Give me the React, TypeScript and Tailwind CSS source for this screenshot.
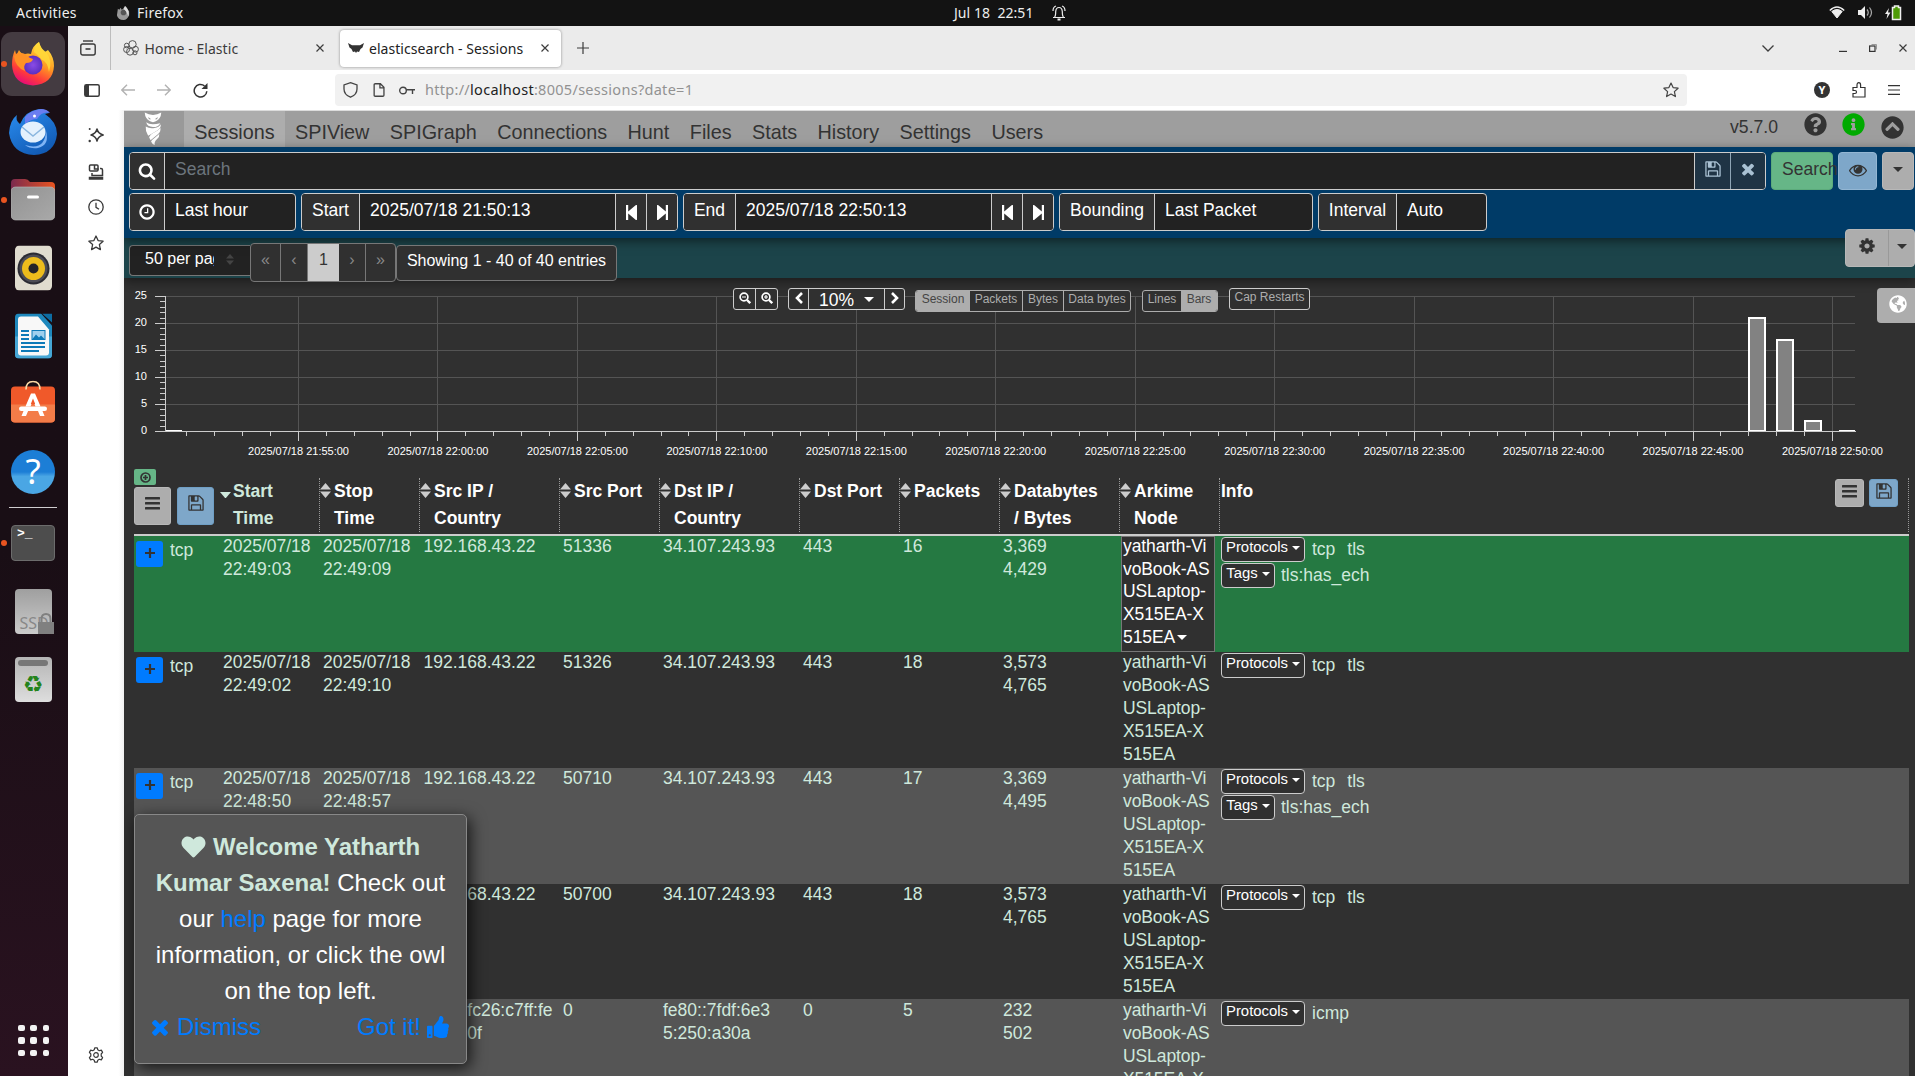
import React from "react";
import {
  FaChevronCircleUp,
  FaGlobeAmericas,
  FaHeart,
  FaInfoCircle,
  FaQuestionCircle,
  FaThumbsUp,
} from "react-icons/fa";

const PATHS = {
  search:
    "M1216 832q0-185-131.5-316.5t-316.5-131.5-316.5 131.5-131.5 316.5 131.5 316.5 316.5 131.5 316.5-131.5 131.5-316.5zm512 832q0 52-38 90t-90 38q-54 0-90-38l-343-342q-179 124-399 124-143 0-273.5-55.5t-225-150-150-225-55.5-273.5 55.5-273.5 150-225 225-150 273.5-55.5 273.5 55.5 225 150 150 225 55.5 273.5q0 220-124 399l343 343q37 37 37 90z",
  times:
    "M1490 1322q0 40-28 68l-136 136q-28 28-68 28t-68-28l-294-294-294 294q-28 28-68 28t-68-28l-136-136q-28-28-28-68t28-68l294-294-294-294q-28-28-28-68t28-68l136-136q28-28 68-28t68 28l294 294 294-294q28-28 68-28t68 28l136 136q28 28 28 68t-28 68l-294 294 294 294q28 28 28 68z",
  floppy:
    "M512 1536h768v-384h-768v384zm896 0h128v-896q0-14-10-38.5t-20-34.5l-281-281q-10-10-34-20t-39-10v416q0 40-28 68t-68 28h-576q-40 0-68-28t-28-68v-416h-128v1280h128v-416q0-40 28-68t68-28h832q40 0 68 28t28 68v416zm-384-928v-320q0-13-9.5-22.5t-22.5-9.5h-192q-13 0-22.5 9.5t-9.5 22.5v320q0 13 9.5 22.5t22.5 9.5h192q13 0 22.5-9.5t9.5-22.5zm640 32v928q0 40-28 68t-68 28h-1344q-40 0-68-28t-28-68v-1344q0-40 28-68t68-28h928q40 0 88 20t76 48l280 280q28 28 48 76t20 88z",
  clock:
    "M1024 544v448q0 14-9 23t-23 9h-320q-14 0-23-9t-9-23v-64q0-14 9-23t23-9h224v-352q0-14 9-23t23-9h64q14 0 23 9t9 23zm416 352q0-148-73-273t-198-198-273-73-273 73-198 198-73 273 73 273 198 198 273 73 273-73 198-198 73-273zm224 0q0 209-103 385.5t-279.5 279.5-385.5 103-385.5-103-279.5-279.5-103-385.5 103-385.5 279.5-279.5 385.5-103 385.5 103 279.5 279.5 103 385.5z",
  eye: "M1664 960q-152-236-381-353 61 104 61 225 0 185-131.5 316.5t-316.5 131.5-316.5-131.5-131.5-316.5q0-121 61-225-229 117-381 353 133 205 333.5 326.5t434.5 121.5 434.5-121.5 333.5-326.5zm-720-384q0-20-14-34t-34-14q-125 0-214.5 89.5t-89.5 214.5q0 20 14 34t34 14 34-14 14-34q0-86 61-147t147-61q20 0 34-14t14-34zm848 384q0 34-20 69-140 230-376.5 368.5t-499.5 138.5-499.5-139-376.5-368q-20-35-20-69t20-69q140-229 376.5-368t499.5-139 499.5 139 376.5 368q20 35 20 69z",
  cog: "M1152 896q0-106-75-181t-181-75-181 75-75 181 75 181 181 75 181-75 75-181zm512-109v222q0 12-8 23t-20 13l-185 28q-19 54-39 91 35 50 107 138 10 12 10 25t-9 23q-27 37-99 108t-94 71q-12 0-26-9l-138-108q-44 23-91 38-16 136-29 186-7 28-36 28h-222q-14 0-24.5-8.5t-11.5-21.5l-28-184q-49-16-90-37l-141 107q-10 9-25 9-14 0-25-11-126-114-165-168-7-10-7-23 0-12 8-23 15-21 51-66.5t54-70.5q-27-50-41-99l-183-27q-13-2-21-12.5t-8-23.5v-222q0-12 8-23t19-13l186-28q14-46 39-92-40-57-107-138-10-12-10-24 0-10 9-23 26-36 98.5-107.5t94.5-71.5q13 0 26 10l138 107q44-23 91-38 16-136 29-186 7-28 36-28h222q14 0 24.5 8.5t11.5 21.5l28 184q49 16 90 37l142-107q9-9 24-9 13 0 25 10 129 119 165 170 7 8 7 22 0 12-8 23-15 21-51 66.5t-54 70.5q26 50 41 98l183 28q13 2 21 12.5t8 23.5z",
};

function Glyph({ name, className }: { name: keyof typeof PATHS; className: string }) {
  return (
    <svg viewBox="0 0 1792 1792" className={className} fill="currentColor">
      <path d={PATHS[name]} />
    </svg>
  );
}

function Caret({ className = "" }: { className?: string }) {
  return (
    <svg viewBox="0 0 10 5" preserveAspectRatio="none" className={`shrink-0 ${className}`} fill="currentColor">
      <path d="M0 0h10L5 5z" />
    </svg>
  );
}

function Step({ back = false }: { back?: boolean }) {
  return (
    <svg viewBox="0 0 11 15" className={back ? "h-[15px] w-[11px]" : "h-[15px] w-[11px] rotate-180"} fill="#fff">
      <path d="M0 0h2.200v6.600L9.600.3Q11-.6 11 .8v13.400q0 1.400-1.400.5L2.200 8.400V15H0z" />
    </svg>
  );
}

function Bars({ className }: { className: string }) {
  return (
    <svg viewBox="0 0 15 13" className={className} fill="currentColor">
      <rect width="15" height="2.600" y="0" rx=".5" />
      <rect width="15" height="2.600" y="5" rx=".5" />
      <rect width="15" height="2.600" y="10" rx=".5" />
    </svg>
  );
}

/* ---------- Desktop ---------- */

function TopBar() {
  return (
    <header className="flex h-[26px] w-full shrink-0 items-center bg-[#131313] pb-[1px] font-['Noto_Sans',sans-serif] text-[14px] text-[#eee]">
      <span className="ml-[16px] w-[100px] tracking-[0.25px]">Activities</span>
      <svg viewBox="0 0 16 16" className="mr-[6px] h-[15px] w-[15px]">
        <path d="M2 4l1.500 1L5 3l1 2 2-1 1-3 1 2 2 1 2 3v4q-2 5-6 5-6 0-7-5z" fill="#999" />
        <circle cx="8" cy="8" r="3" fill="#555" />
        <path d="M10 1q5 5 3 11q-2-6-5-8z" fill="#ddd" />
      </svg>
      <span className="w-[817px] tracking-[0.25px]">Firefox</span>
      <span className="w-[98px] whitespace-pre tracking-[0.05px]">Jul 18  22:51</span>
      <svg viewBox="0 0 14 16" className="h-[16px] w-[14px]" fill="none" stroke="#eee" strokeWidth="1.200">
        <path d="M1 12.500h12M2.500 12q1.200-1 1.200-5.500Q4 2.500 7 2.500t3.300 4q0 4.500 1.200 5.500M1 6q0-4 3-5M13 6q0-4-3-5" />
        <path d="M5.500 14.500h3" strokeWidth="2" />
      </svg>
      <span className="flex-1" />
      <svg viewBox="0 0 16 13" className="mr-[13px] h-[13px] w-[16px]" fill="none" stroke="#eee">
        <path d="M.8 4.500q7.200-7 14.400 0" strokeWidth="1.500" />
        <path d="M2.800 5.500Q8 1.500 13.200 5.500L8 12z" fill="#eee" strokeWidth="1" />
      </svg>
      <svg viewBox="0 0 15 13" className="mr-[12px] h-[13px] w-[15px]" fill="#eee">
        <path d="M0 4h3l4-4v13L3 9H0z" />
        <path d="M9 3.500q2.500 3 0 6M11.500 1.500q4 5 0 10" fill="none" stroke="#aaa" strokeWidth="1.200" />
      </svg>
      <svg viewBox="0 0 17 16" className="mr-[13px] h-[16px] w-[17px]">
        <path d="M4 3L0 9h2.500L1.500 14 5.500 7.500H3z" fill="#eee" />
        <path d="M7.500 2.500h2v-1.500h4v1.500h2v12h-8z" fill="#4e9a06" stroke="#eee" strokeWidth="1.500" />
      </svg>
    </header>
  );
}

function DockSlot({ dot, children }: { dot?: boolean; children: React.ReactNode }) {
  return (
    <div className="relative flex h-[68px] w-[66px] items-center justify-center">
      {dot && <span className="absolute left-[1px] h-[6px] w-[6px] rounded-full bg-[#e95420]" />}
      {children}
    </div>
  );
}

function Dock() {
  return (
    <aside className="flex w-[68px] shrink-0 flex-col bg-linear-to-b from-[#190e15] via-[#190e15] to-[#2a1220] pt-[4px]">
      <svg width="0" height="0" className="absolute">
        <defs>
          <linearGradient id="fx" x1=".8" y1="0" x2=".3" y2="1">
            <stop offset="0" stopColor="#fff044" />
            <stop offset=".45" stopColor="#ff9a22" />
            <stop offset=".75" stopColor="#ff3b3a" />
            <stop offset="1" stopColor="#e3087c" />
          </linearGradient>
          <radialGradient id="fxg">
            <stop offset="0" stopColor="#8a4be6" />
            <stop offset="1" stopColor="#5a2fc0" />
          </radialGradient>
          <linearGradient id="tb" x1="0" y1="0" x2=".6" y2="1">
            <stop offset="0" stopColor="#2b8ff2" />
            <stop offset="1" stopColor="#125bb5" />
          </linearGradient>
          <linearGradient id="fold" x1="0" y1="0" x2="1" y2="1">
            <stop offset="0" stopColor="#929292" />
            <stop offset="1" stopColor="#a9a9a9" />
          </linearGradient>
          <linearGradient id="foldb" x1="0" y1="0" x2="1" y2="0">
            <stop offset="0" stopColor="#7b2a4e" />
            <stop offset="1" stopColor="#e95420" />
          </linearGradient>
        </defs>
      </svg>
      <div className="relative flex h-[68px] w-[66px] items-center justify-center">
        <div className="absolute left-[1px] h-[64px] w-[64px] rounded-[11px] bg-[#443b41]" />
        <span className="absolute left-[1px] h-[6px] w-[6px] rounded-full bg-[#e95420]" />
        <svg viewBox="0 0 44 46" className="relative h-[46px] w-[44px]">
          <path
            d="M1 24Q1 15 4 9l1 4q2-1 3-4 2 4 6 4 3-1 6 0 1-8 8-12 2 7 6 10l3-2q6 7 6 16Q42 43 22 44.500 2 43 1 24z"
            fill="url(#fx)"
          />
          <circle cx="22" cy="24" r="9.500" fill="url(#fxg)" />
          <path d="M3 15q6-4 11-2 2 3 8 5-1 4-7 4-3 3-1 8Q4 26 3 15z" fill="#ff9226" />
          <path d="M23 11q0-7 5-10 1 6 7 10 7 8 3 20-1-10-8-13-3-4-7-7z" fill="#ffd83a" opacity=".85" />
        </svg>
      </div>
      <DockSlot>
        <svg viewBox="0 0 48 46" className="h-[46px] w-[48px]">
          <path d="M0 24Q1 11 8 6q-2 5 3 9Q16 2 30 0q7 0 10 4l-4 1q12 8 12 20Q46 45 25 46 3 45 0 24z" fill="url(#tb)" />
          <path d="M16 8Q22 1 32 0q6 0 9 4-8-2-13 6-6 0-12 5z" fill="#6a7df0" />
          <circle cx="25.500" cy="7" r="1.500" fill="#fff" />
          <path d="M16 36Q36 42 37 22q4 14-8 17-8 1-13-3z" fill="#7fb4f5" />
          <ellipse cx="24" cy="23" rx="12.500" ry="10.500" fill="#e4f1fd" />
          <path d="M13 18l11 9 11-9" fill="none" stroke="#8ab6df" strokeWidth="1.500" />
        </svg>
      </DockSlot>
      <DockSlot dot>
        <svg viewBox="0 0 44 42" className="h-[42px] w-[44px]">
          <path d="M0 4q0-4 4-4h10q3 0 5 3h21q4 0 4 4v12H0z" fill="url(#foldb)" />
          <rect y="8" width="44" height="33" rx="4.500" fill="url(#fold)" stroke="#bbb" strokeWidth=".6" />
          <rect x="16" y="16.500" width="12" height="3" rx="1.500" fill="#fff" />
        </svg>
      </DockSlot>
      <DockSlot>
        <svg viewBox="0 0 37 45" className="h-[45px] w-[37px] -translate-y-[0.5px]">
          <rect width="37" height="45" rx="4.500" fill="#e0dccf" />
          <circle cx="18.500" cy="23" r="16" fill="#2b2b33" />
          <circle cx="18.500" cy="23" r="14" fill="#4c4c55" />
          <circle cx="18.500" cy="23" r="11.500" fill="#edbc1c" />
          <circle cx="18.500" cy="23" r="5" fill="#242428" />
        </svg>
      </DockSlot>
      <DockSlot>
        <svg viewBox="0 0 37 45" className="h-[45px] w-[37px] -translate-y-[0.5px]">
          <path d="M4 0h22l11 12v29q0 4-4 4H4q-4 0-4-4V4q0-4 4-4z" fill="#1e88bd" />
          <path d="M0 23h37v18q0 4-4 4H4q-4 0-4-4z" fill="#46a7d6" />
          <path d="M6 3h17l11 13v23q0 3-3 3H6q-3 0-3-3V6q0-3 3-3z" fill="#f8f8f8" />
          <path d="M27 0h10v9z" fill="#0d6da3" />
          <path d="M6 17.500h8M6 21.500h8M6 25.500h8M6 29.500h24M6 33.500h24M6 37.500h18" stroke="#0d7ab8" strokeWidth="2" />
          <rect x="17" y="17" width="13" height="9" fill="#9fd0ee" stroke="#0d7ab8" />
          <path d="M17 26l4-5 3 3 2-2 4 4z" fill="#0d7ab8" />
        </svg>
      </DockSlot>
      <DockSlot>
        <svg viewBox="0 0 44 43" className="h-[43px] w-[44px] -translate-y-[2.500px]">
          <rect y="6" width="44" height="36" rx="4" fill="#f0592a" />
          <path d="M0 24h44v14q0 4-4 4H4q-4 0-4-4z" fill="#f37c48" />
          <path d="M15 9q0-8 7-8t7 8" fill="none" stroke="#fbd9a5" strokeWidth="1.600" />
          <path d="M15.500 23.500L20 13h4l4.500 10.500h-4.300L22 18l-2.200 5.500zM12.500 30.500h4.600L15 35.500h-4.500zM27 30.500h4.500l2 5H29z" fill="#fff" />
          <rect x="8" y="26" width="28" height="4.500" rx="2.250" fill="#fff" />
          <path d="M15.500 23.500l-1 2.500h5l1-2.500zM28.500 23.500l1 2.500h-5l-1-2.500z" fill="#fff" />
        </svg>
      </DockSlot>
      <DockSlot>
        <div className="flex h-[44px] w-[44px] items-center justify-center rounded-full bg-linear-to-b from-[#1c7ed6] from-50% to-[#4aa6e4] to-60% pb-[2px] font-['Noto_Sans',sans-serif] text-[35px] text-white">
          ?
        </div>
      </DockSlot>
      <div className="ml-[9px] flex h-[3px] w-[48px] items-center">
        <div className="h-px w-full bg-[#d0cdcf]" />
      </div>
      <DockSlot dot>
        <div className="h-[36px] w-[44px] rounded-[4px] border border-[#6c6c6c] bg-[#4d4d4d] pl-[5px] font-['Liberation_Mono',monospace] text-[13px] leading-[15px] font-bold text-white">
          &gt;_
        </div>
      </DockSlot>
      <DockSlot>
        <div className="relative flex h-[45px] w-[37px] items-end rounded-[4px] bg-linear-to-b from-[#9f9f9f] to-[#cbcbcb] pl-[5px] font-['Noto_Sans',sans-serif] text-[16px] leading-[22px] text-[#888]">
          SSD
          <svg viewBox="0 0 16 21" className="absolute -right-[2px] bottom-0 h-[21px] w-[16px]">
            <path d="M3.500 9V6q0-5 4.500-5t4.500 5v3" fill="none" stroke="#808080" strokeWidth="2" />
            <rect y="9" width="16" height="12" fill="#808080" />
          </svg>
        </div>
      </DockSlot>
      <DockSlot>
        <div className="flex h-[45px] w-[37px] flex-col items-center rounded-[4px] bg-linear-to-b from-[#b5b5b5] to-[#dedede] pt-[3px]">
          <div className="h-[6px] w-[30px] rounded-[3px] bg-[#777]" />
          <span className="mt-[5px] font-['DejaVu_Sans',sans-serif] text-[23px] leading-[26px] text-[#24831b]">♻</span>
        </div>
      </DockSlot>
      <div className="mt-auto mb-[20px] ml-[18px] grid w-[31px] grid-cols-3 gap-[6px]">
        {Array.from({ length: 9 }, (_, i) => (
          <span key={i} className="h-[6.500px] w-[6.500px] rounded-[2px] bg-[#f3f3f3]" />
        ))}
      </div>
    </aside>
  );
}

/* ---------- Browser chrome ---------- */

function Cross({ className }: { className: string }) {
  return (
    <svg viewBox="0 0 8 8" className={className} stroke="#3d3d3d" strokeWidth="1.200">
      <path d="M.5.5l7 7M7.500.5l-7 7" />
    </svg>
  );
}

function TabStrip() {
  return (
    <div className="flex h-[44px] shrink-0 items-center bg-[#ebebeb] font-['Noto_Sans',sans-serif] text-[14px] text-[#3c3c3c]">
      <div className="flex h-full w-[43px] items-center border-r border-[#bdbdbd] pl-[12px]">
        <svg viewBox="0 0 16 16" className="h-[16px] w-[16px]" fill="none" stroke="#3a3a3a" strokeWidth="1.400">
          <path d="M3 1h10" />
          <rect x=".8" y="4" width="14.400" height="11" rx="2" />
          <path d="M5.500 9h5" strokeWidth="1.600" />
        </svg>
      </div>
      <div className="flex h-[36px] w-[229px] items-center pl-[12px]">
        <svg viewBox="0 0 16 16" className="h-[16px] w-[16px]" fill="none" stroke="#555" strokeWidth="1">
          <circle cx="9.500" cy="4.300" r="3.700" />
          <circle cx="3.700" cy="5.500" r="2.300" />
          <circle cx="3.600" cy="9.500" r="3" />
          <circle cx="12.500" cy="9.200" r="2.900" />
          <circle cx="7" cy="11.700" r="3.500" />
          <circle cx="12" cy="12.800" r="2" />
        </svg>
        <span className="ml-[5.500px] flex-1 tracking-[0.05px]">Home - Elastic</span>
        <Cross className="mr-[16px] h-[8px] w-[8px]" />
      </div>
      <div className="flex h-[37px] w-[221px] items-center rounded-[4px] bg-white pl-[8px] shadow-[0_0_3px_rgba(0,0,0,0.4)]">
        <svg viewBox="0 0 16 10" className="h-[10px] w-[16px]" fill="#333">
          <path d="M0 0l4 2.200h8L16 0l-1.500 4.500L12.500 6l-1.500 3-2-.5-1 1.500-1-1.500-2 .5-1.500-3-2-1.500z" />
        </svg>
        <span className="ml-[5px] flex-1 tracking-[0.05px] whitespace-nowrap text-[#222]">elasticsearch - Sessions</span>
        <Cross className="mr-[12px] h-[8px] w-[8px]" />
      </div>
      <svg viewBox="0 0 12 12" className="ml-[16px] h-[12px] w-[12px]" stroke="#3d3d3d" strokeWidth="1.200">
        <path d="M6 0v12M0 6h12" />
      </svg>
      <span className="flex-1" />
      <svg viewBox="0 0 12 7" className="mr-[65px] h-[7px] w-[12px]" fill="none" stroke="#3d3d3d" strokeWidth="1.300">
        <path d="M.5.5L6 6l5.500-5.500" />
      </svg>
      <svg viewBox="0 0 8 8" className="mr-[22px] h-[8px] w-[8px]" stroke="#333" strokeWidth="1.200">
        <path d="M0 7.400h8" />
      </svg>
      <svg viewBox="0 0 8 8" className="mr-[22px] h-[8px] w-[8px]" fill="none" stroke="#333" strokeWidth="1.200">
        <rect x=".6" y="2" width="5.400" height="5.400" />
        <path d="M2.500.5h5v5" stroke="#999" strokeWidth="1" />
      </svg>
      <Cross className="mr-[8px] h-[8px] w-[8px]" />
    </div>
  );
}

function AddressBar() {
  return (
    <div className="flex h-[40px] shrink-0 items-center bg-white font-['Noto_Sans',sans-serif]">
      <svg viewBox="0 0 16 13" className="ml-[16px] h-[13px] w-[16px]">
        <rect x=".8" y=".8" width="14.400" height="11.400" rx="1.500" fill="none" stroke="#3a3a3a" strokeWidth="1.500" />
        <rect x="1" y="1" width="4" height="11" fill="#3a3a3a" />
      </svg>
      <svg viewBox="0 0 14 12" className="ml-[21px] h-[12px] w-[14px]" fill="none" stroke="#b2b2b2" strokeWidth="1.400">
        <path d="M14 6H1M6 .7L.8 6 6 11.300" />
      </svg>
      <svg viewBox="0 0 14 12" className="ml-[22px] h-[12px] w-[14px]" fill="none" stroke="#b2b2b2" strokeWidth="1.400">
        <path d="M0 6h13M8 .7L13.200 6 8 11.300" />
      </svg>
      <svg viewBox="0 0 15 15" className="ml-[22px] h-[15px] w-[15px]" fill="none" stroke="#333" strokeWidth="1.500">
        <path d="M13.800 8.200A6.300 6.300 0 1 1 11.500 2.900" />
        <path d="M14.500 0v6h-6z" fill="#333" stroke="none" />
      </svg>
      <div className="ml-[127px] flex h-[32px] w-[1352px] items-center rounded-[4px] bg-[#f1f1f1]">
        <svg viewBox="0 0 15 16" className="ml-[8px] h-[16px] w-[15px]" fill="none" stroke="#444" strokeWidth="1.300">
          <path d="M7.500.7l6.500 2.200v4Q14 12.500 7.500 15.200 1 12.500 1 6.900v-4z" />
        </svg>
        <svg viewBox="0 0 12 15" className="ml-[15px] h-[14px] w-[12px]" fill="none" stroke="#444" strokeWidth="1.400">
          <path d="M2 .8h5.500L11.300 4.600V13q0 1.200-1.200 1.200H2Q.8 14.200.8 13V2Q.8.8 2 .8zM7 .8v4.400h4.300" />
        </svg>
        <svg viewBox="0 0 16 9" className="ml-[14px] h-[9px] w-[16px]" fill="none" stroke="#444" strokeWidth="1.400">
          <circle cx="4" cy="4.500" r="3.300" />
          <path d="M7.300 3.800H16M13.500 4v4" />
        </svg>
        <span className="ml-[10px] flex-1 text-[14.500px] tracking-[0.290px] text-[#929292]">
          http://<span className="text-[#222]">localhost</span>:8005/sessions?date=1
        </span>
        <svg viewBox="0 0 16 16" className="mr-[8px] h-[16px] w-[16px]" fill="none" stroke="#444" strokeWidth="1.200" strokeLinejoin="round">
          <path d="M8 1l2.100 4.600 5 .6-3.700 3.400 1 5L8 12.100l-4.400 2.500 1-5L.9 6.200l5-.6z" />
        </svg>
      </div>
      <div className="ml-[127px] flex h-[16px] w-[16px] items-center justify-center rounded-full bg-[#333] text-[11px] font-bold text-white">Y</div>
      <svg viewBox="0 0 14 16" className="ml-[22px] h-[16px] w-[14px]" fill="none" stroke="#333" strokeWidth="1.200">
        <path d="M1 5.500h4V3q0-2.300 1.800-2.300T8.600 3v2.500H13V15H1v-3.500h2q1.500 0 1.500-1.500T3 8.500H1z" />
      </svg>
      <svg viewBox="0 0 12 10" className="ml-[22px] h-[10px] w-[12px]" stroke="#333" strokeWidth="1.200">
        <path d="M0 .7h12M0 5h12M0 9.300h12" />
      </svg>
    </div>
  );
}

function BrowserSidebar() {
  return (
    <aside className="flex w-[56px] shrink-0 flex-col items-center bg-linear-to-r from-white from-90% to-[#f1f1f1] pt-[17px] pb-[13px]">
      <svg viewBox="0 0 16 16" className="h-[16px] w-[16px]" fill="none" stroke="#3a3a3a" strokeWidth="1.500" strokeLinejoin="round">
        <path d="M9 2q1 4.500 6.200 6Q10 9.500 9 14 8 9.500 3 8q5-1.500 6-6z" />
        <circle cx="1.700" cy="2" r="1" fill="#3a3a3a" stroke="none" />
        <circle cx="1.700" cy="14" r="1.200" fill="#3a3a3a" stroke="none" />
      </svg>
      <svg viewBox="0 0 16 16" className="mt-[21px] h-[16px] w-[16px]" fill="none" stroke="#3a3a3a" strokeWidth="1.500">
        <rect x="1.500" y="1" width="8.500" height="6" rx="1" />
        <path d="M6.500 1v4h4M12 4.500h1q1.500 0 1.500 1.500v5.500H4V9" />
        <path d="M1.500 13.500h13v1.500h-13z" fill="#3a3a3a" />
      </svg>
      <svg viewBox="0 0 16 16" className="mt-[19px] h-[16px] w-[16px]" fill="none" stroke="#3a3a3a" strokeWidth="1.300">
        <circle cx="8" cy="8" r="7.200" />
        <path d="M8 3.800V8.300l3 2" />
      </svg>
      <svg viewBox="0 0 16 16" className="mt-[20px] h-[16px] w-[16px]" fill="none" stroke="#3a3a3a" strokeWidth="1.300" strokeLinejoin="round">
        <path d="M8 1l2.100 4.600 5 .6-3.700 3.400 1 5L8 12.100l-4.400 2.500 1-5L.9 6.200l5-.6z" />
      </svg>
      <svg viewBox="0 0 16 16" className="mt-auto h-[16px] w-[16px]" fill="none" stroke="#3a3a3a" strokeWidth="1.200" strokeLinejoin="round">
        <path d="M6.700.8h2.600l.5 2 1.500.9 2-.6 1.300 2.300L13.200 7v2l1.400 1.600-1.300 2.300-2-.6-1.500.9-.5 2H6.700l-.5-2-1.500-.9-2 .6-1.300-2.300L2.800 9V7L1.400 5.400 2.700 3.100l2 .6 1.500-.9z" />
        <circle cx="8" cy="8" r="2.300" />
      </svg>
    </aside>
  );
}

/* ---------- Arkime ---------- */

const NAV = ["SPIView", "SPIGraph", "Connections", "Hunt", "Files", "Stats", "History", "Settings", "Users"];

function Nav() {
  return (
    <nav className="flex h-[36px] shrink-0 bg-[#9e9e9e] text-[19.800px] text-[#333]">
      <div className="flex w-[60px] justify-center bg-[#999] pt-[1px] pr-[2px]">
        <svg viewBox="0 0 18 34" className="h-[33px] w-[18px]" fill="#fff">
          <path d="M.5.5q4 2.500 8.500 2.500T17.500.5q-.3 4-1.500 5.500-2 3.500-7 4.500Q4 9.500 2 6 .8 4.500.5.5zM4 5.200l3.200 2.300H4.800zM14 5.200l-3.200 2.300h2.400z" fillRule="evenodd" />
          <path d="M2 10.500q4 3.500 14.500 1-2 4-7.500 4Q3 15 2 10.500z" />
          <path d="M1.500 15q4 2.500 9 1.500t6.500-4q.5 4-4.500 7T4 24.500Q1 20 1.500 15z" />
          <path d="M5 26q1-3 6-5.500t5.500-4.500q1 4-2.500 7t-7.500 6z" />
          <path d="M7 30.500q1-2 4.500-4.500t4-3.500q.5 3-2.500 5.500t-2.200 6q-3-1-3.800-3.500z" />
        </svg>
      </div>
      <div className="flex w-[101px] items-center justify-center bg-[#adadad] pt-[6px]">Sessions</div>
      <div className="flex items-center gap-[20.450px] pt-[6px] pl-[10px]">
        {NAV.map((n) => (
          <span key={n}>{n}</span>
        ))}
      </div>
      <div className="ml-auto flex items-start">
        <span className="mr-[26px] pt-[4px] text-[17.600px] leading-[24px]">v5.7.0</span>
        <FaQuestionCircle className="mt-[2px] mr-[15px] h-[23px] w-[23px]" />
        <FaInfoCircle className="mt-[2px] mr-[16px] h-[23px] w-[23px] text-[#00aa00]" />
        <FaChevronCircleUp className="mt-[5px] mr-[11px] h-[23px] w-[23px]" />
      </div>
    </nav>
  );
}

function Group({ className, children }: { className: string; children: React.ReactNode }) {
  return (
    <div className={`flex h-[38px] shrink-0 overflow-hidden rounded-[4px] border border-[#ccc] bg-[#222] text-[#fff] ${className}`}>
      {children}
    </div>
  );
}

const labelCell = "flex shrink-0 items-center justify-center border-r border-[#ccc] bg-[#303030] pb-[4px]";
const iconCell = "flex shrink-0 items-center justify-center border-r border-[#ccc] bg-[#303030]";
const stepCell = "flex w-[31px] shrink-0 items-center justify-center border-l border-[#ccc] bg-[#303030]";

function TimeGroup({ label, value, className, labelClass }: { label: string; value: string; className: string; labelClass: string }) {
  return (
    <Group className={className}>
      <div className={`${labelCell} ${labelClass}`}>{label}</div>
      <div className="flex flex-1 items-center pb-[4px] pl-[10px]">{value}</div>
      <div className={stepCell}>
        <Step back />
      </div>
      <div className={stepCell}>
        <Step />
      </div>
    </Group>
  );
}

function SearchArea() {
  return (
    <section className="relative z-10 flex h-[91px] shrink-0 flex-col gap-[3px] bg-[#003b67] pt-[5px] pl-[5px] shadow-[0_3px_10px_rgba(0,0,0,0.5)]">
      <div className="flex">
        <Group className="w-[1637px]">
          <div className={`${iconCell} w-[35px]`}>
            <Glyph name="search" className="h-[18px] w-[18px]" />
          </div>
          <div className="flex flex-1 items-center pb-[4px] pl-[10px] text-[#6c757d]">Search</div>
          <div className="flex w-[36px] items-center justify-center border-l border-[#ccc] bg-[#1f3445] pb-[4px] text-[#a9c1d3]">
            <Glyph name="floppy" className="h-[18px] w-[18px]" />
          </div>
          <div className="flex w-[35px] items-center justify-center border-l border-[#8fa5b5] bg-[#1f3445] pb-[4px] text-[#a9c1d3]">
            <Glyph name="times" className="h-[18px] w-[18px]" />
          </div>
        </Group>
        <div className="ml-[5px] flex h-[38px] w-[62px] items-center overflow-visible rounded-[4px] border border-[#5cab7b] bg-[#66b687] pb-[4px] pl-[10px] text-[#333]">
          Search
        </div>
        <div className="ml-[5px] flex h-[38px] w-[39px] items-center justify-center rounded-[4px] border border-[#93b6d3] bg-[#7ea7c9] pb-[3px] text-[#333]">
          <Glyph name="eye" className="h-[18px] w-[18px]" />
        </div>
        <div className="ml-[5px] flex h-[38px] w-[32px] items-center justify-center rounded-[4px] border border-[#b8b8b8] bg-[#adadad] pb-[4px] text-[#333]">
          <Caret className="h-[5px] w-[10px]" />
        </div>
      </div>
      <div className="flex gap-[5px]">
        <Group className="w-[167px]">
          <div className={`${iconCell} w-[35px]`}>
            <Glyph name="clock" className="h-[18px] w-[18px]" />
          </div>
          <div className="flex items-center pb-[4px] pl-[10px]">Last hour</div>
        </Group>
        <TimeGroup label="Start" value="2025/07/18 21:50:13" className="w-[377px]" labelClass="w-[58px]" />
        <TimeGroup label="End" value="2025/07/18 22:50:13" className="w-[371px]" labelClass="w-[52px]" />
        <Group className="w-[254px]">
          <div className={`${labelCell} w-[95px]`}>Bounding</div>
          <div className="flex items-center pb-[4px] pl-[10px]">Last Packet</div>
        </Group>
        <Group className="w-[169px]">
          <div className={`${labelCell} w-[78px]`}>Interval</div>
          <div className="flex items-center pb-[4px] pl-[10px]">Auto</div>
        </Group>
      </div>
      <div className="absolute top-[82px] right-0 flex h-[38px] w-[70px] overflow-hidden rounded-[4px] border border-[#b8b8b8] bg-[#adadad] text-[#333]">
        <div className="flex w-[43px] items-center justify-center border-r border-[#999] pb-[4px]">
          <Glyph name="cog" className="h-[18px] w-[18px]" />
        </div>
        <div className="flex flex-1 items-center justify-center pb-[4px]">
          <Caret className="h-[5px] w-[10px]" />
        </div>
      </div>
    </section>
  );
}

function PagingBar() {
  const cell = "flex items-center justify-center border-r border-[#777] pb-[5px] text-[#888]";
  return (
    <section className="flex h-[40px] shrink-0 items-start bg-[#1c444a] pl-[5px] text-[16px] shadow-[0_3px_10px_rgba(0,0,0,0.45)]">
      <div className="mt-[7px] flex h-[31px] w-[121px] items-center overflow-hidden rounded-l-[4px] border border-r-0 border-[#777] bg-[#222] pb-[4px] pl-[15px] text-white">
        <span className="w-[69px] shrink-0 overflow-hidden whitespace-nowrap">50 per page</span>
        <svg viewBox="0 0 8 11" className="mt-[2px] ml-[12px] h-[11px] w-[8px]" fill="#444">
          <path d="M0 4.500L4 0l4 4.500zM0 6.500h8L4 11z" />
        </svg>
      </div>
      <div className="relative z-20 mt-[5px] flex h-[39px] w-[146px] shrink-0 overflow-hidden rounded-[4px] border border-[#777] bg-[#303030]">
        <div className={`${cell} w-[30px]`}>«</div>
        <div className={`${cell} w-[27px]`}>‹</div>
        <div className="flex w-[31px] items-center justify-center bg-[#ccc] pb-[5px] text-[#333]">1</div>
        <div className={`${cell} w-[27px]`}>›</div>
        <div className="flex flex-1 items-center justify-center pb-[5px] text-[#888]">»</div>
      </div>
      <div className="relative z-20 mt-[7px] flex h-[36px] w-[221px] shrink-0 items-center justify-center rounded-[4px] border border-[#777] bg-[#303030] pb-[5px] text-white">
        Showing 1 - 40 of 40 entries
      </div>
    </section>
  );
}

const TIMES = ["21:55", "22:00", "22:05", "22:10", "22:15", "22:20", "22:25", "22:30", "22:35", "22:40", "22:45", "22:50"];
const PITCH = 139.45;
const FIRST = 174.5;

function Chart() {
  const minor: number[] = [];
  for (let i = -4; i < 56; i++) {
    if (i % 5 !== 0) minor.push(FIRST + (i * PITCH) / 5);
  }
  return (
    <svg viewBox="0 0 1791 200" className="h-[200px] w-[1791px]" fontSize="11" fill="#fff" shapeRendering="crispEdges">
      <g stroke="#545454" strokeWidth="1">
        {[0, 1, 2, 3, 4].map((i) => (
          <path key={i} d={`M41 ${18.500 + i * 27}H1731`} />
        ))}
        {TIMES.map((t, i) => (
          <path key={t} d={`M${FIRST + i * PITCH} 18V153`} />
        ))}
      </g>
      <g fill="#828282" stroke="#fff" strokeWidth="2">
        <rect x="1625" y="40" width="16" height="113" />
        <rect x="1653" y="62" width="16" height="91" />
        <rect x="1681" y="143" width="16" height="10" />
      </g>
      <path d="M41 152.500h17M1715 152.500h16" stroke="#fff" strokeWidth="2" />
      <g stroke="#ccc" strokeWidth="1" fill="none">
        <path d="M41.500 18V153.500H1732" />
        {[0, 1, 2, 3, 4, 5].map((i) => (
          <path key={i} d={`M31 ${18.500 + i * 27}h10`} />
        ))}
        {Array.from({ length: 25 }, (_, i) => (
          <path key={i} d={`M36 ${18.500 + i * 5.400}h5`} />
        ))}
        {minor.map((x) => (
          <path key={x} d={`M${x} 154v4`} />
        ))}
        {TIMES.map((t, i) => (
          <path key={t} d={`M${FIRST + i * PITCH} 154v9`} />
        ))}
      </g>
      {[25, 20, 15, 10, 5, 0].map((v, i) => (
        <text key={v} x="23" y={21 + i * 27} textAnchor="end">
          {v}
        </text>
      ))}
      {TIMES.map((t, i) => (
        <text key={t} x={FIRST + i * PITCH} y="177" textAnchor="middle">
          {`2025/07/18 ${t}:00`}
        </text>
      ))}
    </svg>
  );
}

function Zoom({ plus = false }: { plus?: boolean }) {
  return (
    <svg viewBox="0 0 12 12" className="h-[12px] w-[12px]" fill="none" stroke="#fff">
      <circle cx="5" cy="5" r="3.900" strokeWidth="1.700" />
      <path d="M8 8l3.200 3.200" strokeWidth="2.300" />
      <path d={plus ? "M3 5h4M5 3v4" : "M3 5h4"} strokeWidth="1.200" />
    </svg>
  );
}

function Angle({ right = false }: { right?: boolean }) {
  return (
    <svg viewBox="0 0 8 12" className={right ? "h-[12px] w-[8px] rotate-180" : "h-[12px] w-[8px]"} fill="none" stroke="#fff" strokeWidth="2.600">
      <path d="M7 1L2 6l5 5" />
    </svg>
  );
}

function ChartControls() {
  const group = "flex h-[22px] overflow-hidden rounded-[3px] border bg-[#303030]";
  return (
    <div className="absolute top-[10px] left-[609px] flex text-[12px] text-[#adadad]">
      <div className={`${group} w-[45px] border-[#ccc]`}>
        <div className="flex w-[22px] items-center justify-center border-r border-[#ccc] pb-[2px]">
          <Zoom />
        </div>
        <div className="flex flex-1 items-center justify-center pb-[2px]">
          <Zoom plus />
        </div>
      </div>
      <div className={`${group} ml-[10px] w-[117px] border-[#ccc]`}>
        <div className="flex w-[20px] items-center justify-center border-r border-[#ccc] pb-[3px]">
          <Angle />
        </div>
        <div className="flex w-[76px] items-center justify-center gap-[10px] border-r border-[#ccc] text-[17.500px] leading-none text-white">
          <span className="pt-[4px]">10%</span>
          <Caret className="h-[5px] w-[10px]" />
        </div>
        <div className="flex flex-1 items-center justify-center pb-[3px]">
          <Angle right />
        </div>
      </div>
      <div className={`${group} mt-[2px] ml-[10px] w-[216px] border-[#adadad] leading-[17px]`}>
        <div className="w-[54px] bg-[#adadad] text-center text-[#444]">Session</div>
        <div className="w-[53px] border-r border-[#adadad] text-center">Packets</div>
        <div className="w-[41px] border-r border-[#adadad] text-center">Bytes</div>
        <div className="flex-1 text-center">Data bytes</div>
      </div>
      <div className={`${group} mt-[2px] ml-[11px] w-[76px] border-[#adadad] leading-[17px]`}>
        <div className="w-[38px] text-center">Lines</div>
        <div className="flex-1 bg-[#adadad] text-center text-[#444]">Bars</div>
      </div>
      <div className={`${group} ml-[11px] w-[81px] justify-center border-[#ccc] leading-[17px]`}>Cap Restarts</div>
    </div>
  );
}

function Sort() {
  return (
    <svg viewBox="0 0 11 15" className="mt-[5px] mr-[3px] h-[15px] w-[11px] shrink-0" fill="#ccc">
      <path d="M0 6.500L5.500 0 11 6.500zM0 8.500h11L5.500 15z" />
    </svg>
  );
}

const GRID = "grid grid-cols-[85px_101px_100px_140px_100px_140px_100px_100px_120px_100px_689px]";

const HEAD: [string, string?][] = [
  ["Stop", "Time"],
  ["Src IP /", "Country"],
  ["Src Port"],
  ["Dst IP /", "Country"],
  ["Dst Port"],
  ["Packets"],
  ["Databytes", "/ Bytes"],
  ["Arkime", "Node"],
];

function TableHead() {
  return (
    <div className={`${GRID} relative h-[58px] border-b-[2px] border-[#ccc] font-bold text-white leading-[27px]`}>
      <div className="flex items-start gap-[6px] pt-[9px]">
        <div className="flex h-[38px] w-[37px] items-center justify-center rounded-[3px] border border-[#b8b8b8] bg-[#adadad] pb-[5px] text-[#333]">
          <Bars className="h-[13px] w-[15px]" />
        </div>
        <div className="flex h-[38px] w-[37px] items-center justify-center rounded-[3px] border border-[#6f9fc5] bg-[#7ea7c9] pb-[6px] text-[#333]">
          <Glyph name="floppy" className="h-[18px] w-[18px]" />
        </div>
      </div>
      <div className="mb-[2px] flex border-r border-dotted border-[#999] text-[#cfe8dc]">
        <Caret className="mt-[13.500px] mr-[2px] ml-[1px] h-[6.500px] w-[11px]" />
        <span>
          Start
          <br />
          Time
        </span>
      </div>
      {HEAD.map(([a, b]) => (
        <div key={a} className="mb-[2px] flex border-r border-dotted border-[#999] whitespace-nowrap">
          <Sort />
          <span>
            {a}
            {b && <br />}
            {b}
          </span>
        </div>
      ))}
      <div className="mb-[2px] flex border-r border-dotted border-[#999]">
        <span className="flex-1 pl-[1px]">Info</span>
        <div className="mt-[1px] mr-[5px] flex h-[28px] w-[29px] items-center justify-center rounded-[3px] border border-[#b8b8b8] bg-[#adadad] pb-[4px] text-[#333]">
          <Bars className="h-[13px] w-[15px]" />
        </div>
        <div className="mt-[1px] mr-[10px] flex h-[28px] w-[29px] items-center justify-center rounded-[3px] border border-[#6f9fc5] bg-[#7ea7c9] pb-[4px] text-[#333]">
          <Glyph name="floppy" className="h-[18px] w-[18px]" />
        </div>
      </div>
      <div className="absolute -top-[9px] left-0 flex h-[16px] w-[22px] items-center justify-center rounded-[2px] bg-[#66b687]">
        <svg viewBox="0 0 11 11" className="h-[11px] w-[11px]" fill="none" stroke="#333">
          <circle cx="5.500" cy="5.500" r="4.500" strokeWidth="1.700" />
          <path d="M5.500 3v5M3 5.500h5" strokeWidth="1.700" />
        </svg>
      </div>
    </div>
  );
}

type Session = {
  proto: string;
  start: string;
  stop: string;
  src: string[];
  sport: string;
  dst: string[];
  dport: string;
  packets: string;
  bytes: [string, string];
  protocols: string[];
  tags?: string;
};

const ROWS: Session[] = [
  { proto: "tcp", start: "22:49:03", stop: "22:49:09", src: ["192.168.43.22"], sport: "51336", dst: ["34.107.243.93"], dport: "443", packets: "16", bytes: ["3,369", "4,429"], protocols: ["tcp", "tls"], tags: "tls:has_ech" },
  { proto: "tcp", start: "22:49:02", stop: "22:49:10", src: ["192.168.43.22"], sport: "51326", dst: ["34.107.243.93"], dport: "443", packets: "18", bytes: ["3,573", "4,765"], protocols: ["tcp", "tls"] },
  { proto: "tcp", start: "22:48:50", stop: "22:48:57", src: ["192.168.43.22"], sport: "50710", dst: ["34.107.243.93"], dport: "443", packets: "17", bytes: ["3,369", "4,495"], protocols: ["tcp", "tls"], tags: "tls:has_ech" },
  { proto: "tcp", start: "22:48:49", stop: "22:48:57", src: ["192.168.43.22"], sport: "50700", dst: ["34.107.243.93"], dport: "443", packets: "18", bytes: ["3,573", "4,765"], protocols: ["tcp", "tls"] },
  { proto: "icmp", start: "22:48:48", stop: "22:48:55", src: ["fe80::fc26:c7ff:fe", "d4:e10f"], sport: "0", dst: ["fe80::7fdf:6e3", "5:250:a30a"], dport: "0", packets: "5", bytes: ["232", "502"], protocols: ["icmp"] },
];

const ROW_STYLE = [
  "bg-[#257942] h-[116px]",
  "bg-[#303030] h-[116px]",
  "bg-[#555555] h-[116px]",
  "bg-[#303030] h-[115px]",
  "bg-[#555555] h-[116px] pt-[1px]",
];
const NODE = ["yatharth-Vi", "voBook-AS", "USLaptop-", "X515EA-X", "515EA"];

function Lines({ lines, className = "pl-[3px]" }: { lines: string[]; className?: string }) {
  return (
    <div className={`-mt-[1px] whitespace-nowrap ${className}`}>
      {lines.map((l) => (
        <div key={l}>{l}</div>
      ))}
    </div>
  );
}

function Chip({ label, width }: { label: string; width: string }) {
  return (
    <span className={`${width} flex h-[25px] items-center justify-center gap-[4px] rounded-[4px] border border-[#ccc] bg-[#303030] pb-[4px] text-[14.900px] leading-none text-white`}>
      {label}
      <Caret className="h-[4px] w-[8px]" />
    </span>
  );
}

function Row({ s, i }: { s: Session; i: number }) {
  return (
    <div className={`${GRID} ${ROW_STYLE[i]} overflow-hidden leading-[22.900px] text-[#cfe8dc]`}>
      <div className="flex items-start pt-[5px] pl-[2px]">
        <div className="flex h-[26px] w-[27px] items-center justify-center rounded-[3px] bg-[#007bff] pb-[3px]">
          <svg viewBox="0 0 10 10" className="h-[10px] w-[10px]" stroke="#333" strokeWidth="2.200">
            <path d="M5 0v10M0 5h10" />
          </svg>
        </div>
        <span className="block h-[18px] pl-[7px] leading-[18px]">{s.proto}</span>
      </div>
      <Lines lines={["2025/07/18", s.start]} className="pl-[4px]" />
      <Lines lines={["2025/07/18", s.stop]} />
      <Lines lines={s.src} className="pl-[3.500px]" />
      <Lines lines={[s.sport]} />
      <Lines lines={s.dst} />
      <Lines lines={[s.dport]} />
      <Lines lines={[s.packets]} />
      <Lines lines={s.bytes} />
      {i === 0 ? (
        <div className="ml-[1px] h-[116px] w-[94px] border border-[#777] bg-[#303030] pl-[1px] leading-[22.700px] text-white">
          <div className="-mt-[2px]">
            {NODE.map((l, n) => (
              <div key={l} className="flex items-center tracking-[-0.1px]">
                {l}
                {n === 4 && <Caret className="ml-[2px] h-[5px] w-[10px]" />}
              </div>
            ))}
          </div>
        </div>
      ) : (
        <Lines lines={NODE} className="pl-[3px] tracking-[-0.1px]" />
      )}
      <div className="flex flex-col gap-[2px] pt-[1px] pl-[1px]">
        <div className="flex h-[25px] items-center gap-[7px]">
          <Chip label="Protocols" width="w-[84px]" />
          <span className="-mt-[1px] flex gap-[12px]">
            {s.protocols.map((p) => (
              <span key={p}>{p}</span>
            ))}
          </span>
        </div>
        {s.tags && (
          <div className="-mt-[1px] flex h-[25px] items-center gap-[6px]">
            <Chip label="Tags" width="w-[54px]" />
            <span className="-mt-[1px]">{s.tags}</span>
          </div>
        )}
      </div>
    </div>
  );
}

function Welcome() {
  return (
    <div className="absolute bottom-[12px] left-[10px] z-30 h-[250px] w-[333px] rounded-[5px] border border-[#888] bg-[#555] pt-[14px] text-center text-[24px] leading-[36px] text-white shadow-[3px_4px_16px_rgba(0,0,0,0.75)]">
      <div className="whitespace-nowrap">
        <FaHeart className="mr-[7px] inline-block h-[24px] w-[25px] -translate-y-[2px] text-[#cfe8dc]" />
        <b className="text-[#cfe8dc]">Welcome Yatharth</b>
      </div>
      <div className="whitespace-nowrap">
        <b className="text-[#cfe8dc]">Kumar Saxena!</b> Check out
      </div>
      <div>
        our <span className="text-[#007bff]">help</span> page for more
      </div>
      <div>information, or click the owl</div>
      <div>on the top left.</div>
      <div className="flex items-center justify-between pr-[17px] pl-[13px] text-[#007bff]">
        <span className="flex items-center">
          <Glyph name="times" className="mr-[5px] h-[24px] w-[24px]" />
          Dismiss
        </span>
        <span className="flex items-center">
          Got it!
          <FaThumbsUp className="ml-[6px] h-[22px] w-[22px]" />
        </span>
      </div>
    </div>
  );
}

export default function App() {
  return (
    <div className="flex h-[1076px] w-[1915px] flex-col overflow-hidden">
      <TopBar />
      <div className="flex min-h-0 flex-1">
        <Dock />
        <div className="flex min-w-0 flex-1 flex-col">
          <TabStrip />
          <AddressBar />
          <div className="flex min-h-0 flex-1">
            <BrowserSidebar />
            <main className="relative flex min-w-0 flex-1 flex-col overflow-hidden border-t border-[#dcdcdc] bg-[#303030] font-['Liberation_Sans',sans-serif] text-[17.500px] leading-[24px]">
              <Nav />
              <SearchArea />
              <PagingBar />
              <div className="relative h-[200px] shrink-0">
                <Chart />
                <ChartControls />
                <div className="absolute top-[10px] right-0 flex h-[35px] w-[38px] items-center justify-center rounded-l-[4px] bg-[#adadad] pb-[4px] pl-[3px]">
                  <FaGlobeAmericas className="h-[18px] w-[18px] text-white" />
                </div>
              </div>
              <div className="ml-[10px] w-[1775px] shrink-0">
                <TableHead />
                {ROWS.map((s, i) => (
                  <Row key={i} s={s} i={i} />
                ))}
              </div>
              <Welcome />
            </main>
          </div>
        </div>
      </div>
    </div>
  );
}
